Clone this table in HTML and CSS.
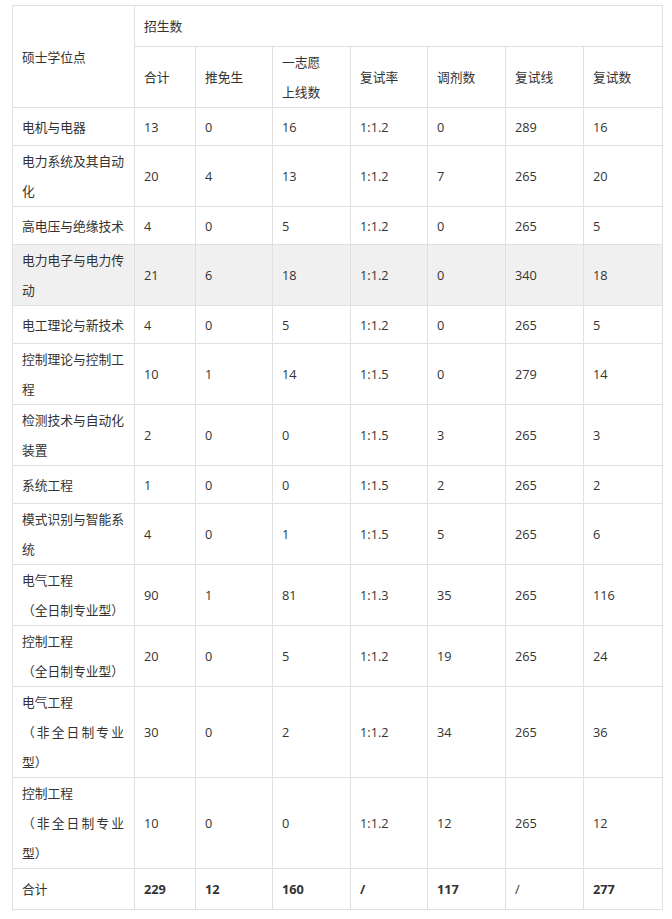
FILE: index.html
```html
<!DOCTYPE html>
<html lang="zh-CN">
<head>
<meta charset="utf-8">
<title>招生数</title>
<link rel="stylesheet" href="styles.css">
</head>
<body>
<div class="wrap">
<table class="grid">
  <colgroup>
    <col class="c1"><col class="c2"><col class="c3"><col class="c4"><col class="c5"><col class="c6"><col class="c7"><col class="c8">
  </colgroup>
  <tbody>
    <tr class="h41">
      <td rowspan="2">硕士学位点</td>
      <td colspan="7">招生数</td>
    </tr>
    <tr>
      <td>合计</td><td>推免生</td><td>一志愿<br>上线数</td><td>复试率</td><td>调剂数</td><td>复试线</td><td>复试数</td>
    </tr>
    <tr class="h38">
      <td>电机与电器</td><td>13</td><td>0</td><td>16</td><td>1:1.2</td><td>0</td><td>289</td><td>16</td>
    </tr>
    <tr>
      <td>电力系统及其自动化</td><td>20</td><td>4</td><td>13</td><td>1:1.2</td><td>7</td><td>265</td><td>20</td>
    </tr>
    <tr class="h38">
      <td>高电压与绝缘技术</td><td>4</td><td>0</td><td>5</td><td>1:1.2</td><td>0</td><td>265</td><td>5</td>
    </tr>
    <tr class="hl">
      <td>电力电子与电力传动</td><td>21</td><td>6</td><td>18</td><td>1:1.2</td><td>0</td><td>340</td><td>18</td>
    </tr>
    <tr class="h38">
      <td>电工理论与新技术</td><td>4</td><td>0</td><td>5</td><td>1:1.2</td><td>0</td><td>265</td><td>5</td>
    </tr>
    <tr>
      <td>控制理论与控制工程</td><td>10</td><td>1</td><td>14</td><td>1:1.5</td><td>0</td><td>279</td><td>14</td>
    </tr>
    <tr>
      <td>检测技术与自动化装置</td><td>2</td><td>0</td><td>0</td><td>1:1.5</td><td>3</td><td>265</td><td>3</td>
    </tr>
    <tr class="h38">
      <td>系统工程</td><td>1</td><td>0</td><td>0</td><td>1:1.5</td><td>2</td><td>265</td><td>2</td>
    </tr>
    <tr>
      <td>模式识别与智能系统</td><td>4</td><td>0</td><td>1</td><td>1:1.5</td><td>5</td><td>265</td><td>6</td>
    </tr>
    <tr>
      <td>电气工程<br>（全日制专业型）</td><td>90</td><td>1</td><td>81</td><td>1:1.3</td><td>35</td><td>265</td><td>116</td>
    </tr>
    <tr>
      <td>控制工程<br>（全日制专业型）</td><td>20</td><td>0</td><td>5</td><td>1:1.2</td><td>19</td><td>265</td><td>24</td>
    </tr>
    <tr>
      <td class="just">电气工程<br>（非全日制专业型）</td><td>30</td><td>0</td><td>2</td><td>1:1.2</td><td>34</td><td>265</td><td>36</td>
    </tr>
    <tr>
      <td class="just">控制工程<br>（非全日制专业型）</td><td>10</td><td>0</td><td>0</td><td>1:1.2</td><td>12</td><td>265</td><td>12</td>
    </tr>
    <tr class="h41 total">
      <td>合计</td><td><b>229</b></td><td><b>12</b></td><td><b>160</b></td><td><b>/</b></td><td><b>117</b></td><td>/</td><td><b>277</b></td>
    </tr>
  </tbody>
</table>
</div>
</body>
</html>
```
FILE: styles.css
```css
html, body {
  margin: 0;
  padding: 0;
  background: #fff;
}
.wrap {
  padding: 5px 0 0 12px;
}
.grid {
  border-collapse: collapse;
  table-layout: fixed;
  width: 650px;
  font-family: "Open Sans", "Noto Sans CJK SC", sans-serif;
  font-size: 12.75px;
  color: #333;
  text-spacing-trim: space-all;
}
.c1 { width: 122px; }
.c2 { width: 61px; }
.c3 { width: 77px; }
.c4 { width: 78px; }
.c5 { width: 77px; }
.c6 { width: 78px; }
.c7 { width: 78px; }
.c8 { width: 79px; }
.grid td {
  border: 1px solid #e0e0e0;
  padding: 0 10px 0 9px;
  line-height: 30px;
  vertical-align: middle;
  text-align: left;
  word-break: break-all;
}
.grid .h38 td { height: 37px; }
.grid .h41 td { height: 40px; }
.grid .hl td { background: #f0f0f0; }
.grid td.just { text-align: justify; }
.grid b { font-weight: 700; }
```
